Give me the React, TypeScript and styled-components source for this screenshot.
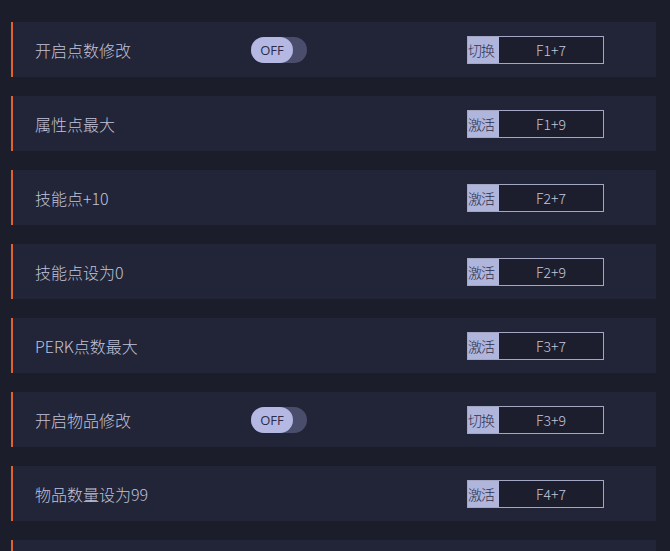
import React from 'react';
import styled, { createGlobalStyle } from 'styled-components';

const GlobalStyle = createGlobalStyle`
  html, body {
    margin: 0;
    padding: 0;
    background: #1a1c2a;
    font-family: "Noto Sans CJK SC", "Noto Sans", sans-serif;
  }
`;

const Page = styled.div`
  width: 670px;
  height: 551px;
  overflow: hidden;
  background: #1b1d2b;
`;

const List = styled.div`
  display: flex;
  flex-direction: column;
  gap: 19px;
  width: 645px;
  padding: 22px 0 0 11px;
`;

const Row = styled.div`
  display: grid;
  grid-template-columns: 216px 216px 137px;
  align-items: center;
  height: 55px;
  padding-left: 22px;
  background: #222538;
  border-left: 2px solid #e2622c;
  flex-shrink: 0;
`;

const Label = styled.span`
  font-size: 16px;
  font-weight: 300;
  color: #c0c3da;
  white-space: nowrap;
`;

const Toggle = styled.div`
  display: flex;
  width: 56px;
  height: 26px;
  border-radius: 13px;
  background: #4a4e6c;
`;

const Knob = styled.span`
  display: flex;
  align-items: center;
  justify-content: center;
  width: 42px;
  height: 26px;
  border-radius: 13px;
  background: #b4b8e2;
  color: #2a2d48;
  font-family: "Open Sans", "Noto Sans", sans-serif;
  font-size: 13px;
`;

const Hotkey = styled.div`
  display: flex;
  height: 28px;
  border: 1px solid #a3a7c4;
  box-sizing: border-box;
  background: #1c1e2e;
`;

const HotkeyTag = styled.span`
  display: flex;
  align-items: center;
  width: 31px;
  background: #b0b5dc;
  color: #2c2f4a;
  font-size: 14px;
  font-weight: 300;
  letter-spacing: -1px;
  white-space: nowrap;
  overflow: hidden;
`;

const HotkeyKeys = styled.span`
  flex: 1;
  display: flex;
  align-items: center;
  justify-content: center;
  color: #c4c8dc;
  font-size: 14px;
  font-weight: 300;
`;

type Item = { label: string; toggle?: boolean; tag: string; keys: string };

const items: Item[] = [
  { label: '开启点数修改', toggle: true, tag: '切换', keys: 'F1+7' },
  { label: '属性点最大', tag: '激活', keys: 'F1+9' },
  { label: '技能点+10', tag: '激活', keys: 'F2+7' },
  { label: '技能点设为0', tag: '激活', keys: 'F2+9' },
  { label: 'PERK点数最大', tag: '激活', keys: 'F3+7' },
  { label: '开启物品修改', toggle: true, tag: '切换', keys: 'F3+9' },
  { label: '物品数量设为99', tag: '激活', keys: 'F4+7' },
  { label: '', tag: '', keys: '' },
];

export default function App() {
  return (
    <Page>
      <GlobalStyle />
      <List>
        {items.map((item, i) => (
          <Row key={i}>
            <Label>{item.label}</Label>
            <div>
              {item.toggle && (
                <Toggle>
                  <Knob>OFF</Knob>
                </Toggle>
              )}
            </div>
            {item.keys && (
              <Hotkey>
                <HotkeyTag>{item.tag}</HotkeyTag>
                <HotkeyKeys>{item.keys}</HotkeyKeys>
              </Hotkey>
            )}
          </Row>
        ))}
      </List>
    </Page>
  );
}
